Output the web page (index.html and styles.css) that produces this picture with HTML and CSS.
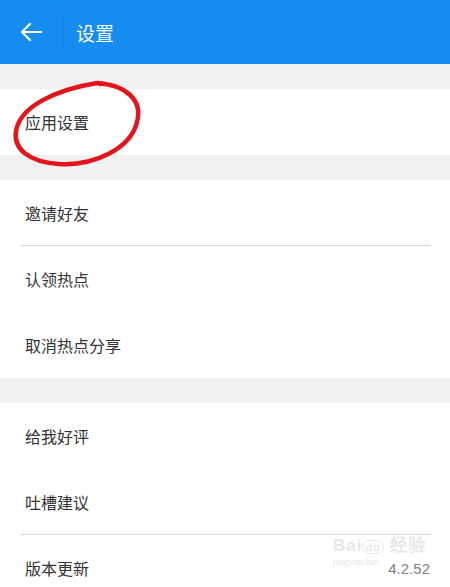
FILE: index.html
```html
<!DOCTYPE html>
<html lang="zh-CN">
<head>
  <meta charset="UTF-8" />
  <meta name="viewport" content="width=device-width, initial-scale=1.0" />
  <title>设置</title>
  <link rel="stylesheet" href="styles.css">
</head>
<body>
  <header class="topbar">
    <svg class="back" width="22" height="20" viewBox="0 0 22 20">
      <path d="M21 10H3M10 2L2 10l8 8" fill="none" stroke="#fff" stroke-width="2.2" stroke-linecap="round" stroke-linejoin="round"/>
    </svg>
    <span class="sep"></span>
    <h1>设置</h1>
  </header>

  <main>
    <section class="group">
      <div class="row">应用设置</div>
    </section>

    <section class="group">
      <div class="row line">邀请好友</div>
      <div class="row">认领热点</div>
      <div class="row">取消热点分享</div>
    </section>

    <section class="group">
      <div class="row">给我好评</div>
      <div class="row line">吐槽建议</div>
      <div class="row">版本更新<span class="ver">4.2.52</span></div>
    </section>
  </main>

  <!-- red hand-drawn mark over the first row -->
  <svg class="mark" width="160" height="110" viewBox="0 70 160 110">
    <path d="M97 83C126 85 143 100 137 122C131 148 95 166 59 164C29 162 13 149 16 131C20 107 54 90 97 83L101 84" fill="none" stroke="#e3141c" stroke-width="4.5" stroke-linecap="round"/>
  </svg>

  <div class="watermark">
    <span class="wm-logo">Bai<span class="paw">du</span> 经验</span>
    <span class="wm-url">jingyan.bai</span>
  </div>
</body>
</html>
```

FILE: styles.css
```css
* {
  box-sizing: border-box;
}

body {
  margin: 0;
  background: #f1f1f1;
  font-family: "Noto Sans CJK SC", "Noto Sans", sans-serif;
  color: #333;
  overflow: hidden;
}

.topbar {
  height: 64px;
  background: #168cf0;
  display: flex;
  align-items: center;
  padding-left: 20px;
}

.back {
  display: block;
}

.sep {
  width: 1px;
  height: 36px;
  background: #127fdc;
  margin: 0 13px 0 20px;
}

.topbar h1 {
  margin: 0;
  font-size: 19px;
  font-weight: 400;
  color: #fff;
}

main {
  display: flex;
  flex-direction: column;
}

.group {
  background: #fff;
  margin-top: 25px;
}

.row {
  height: 66px;
  display: flex;
  align-items: center;
  justify-content: space-between;
  padding: 0 20px 0 25px;
  font-size: 16px;
  position: relative;
}

.row.line::after {
  content: "";
  position: absolute;
  left: 20px;
  right: 19px;
  bottom: 0;
  height: 1px;
  background: #d9d9d9;
}

.ver {
  font-size: 15px;
  color: #808080;
  font-family: "Liberation Sans", sans-serif;
}

.mark {
  position: absolute;
  left: 0;
  top: 70px;
}

.watermark {
  position: absolute;
  left: 333px;
  top: 531px;
  display: flex;
  flex-direction: column;
  color: #e8e8e8;
  pointer-events: none;
}

.wm-logo {
  font-family: "Liberation Sans", sans-serif;
  font-size: 17px;
  font-weight: 700;
  letter-spacing: 1px;
}

.paw {
  border: 1px solid #e8e8e8;
  border-radius: 8px;
  font-size: 11px;
  padding: 0 2px;
}

.wm-url {
  font-family: "Liberation Serif", serif;
  font-style: italic;
  font-size: 10px;
}
```
